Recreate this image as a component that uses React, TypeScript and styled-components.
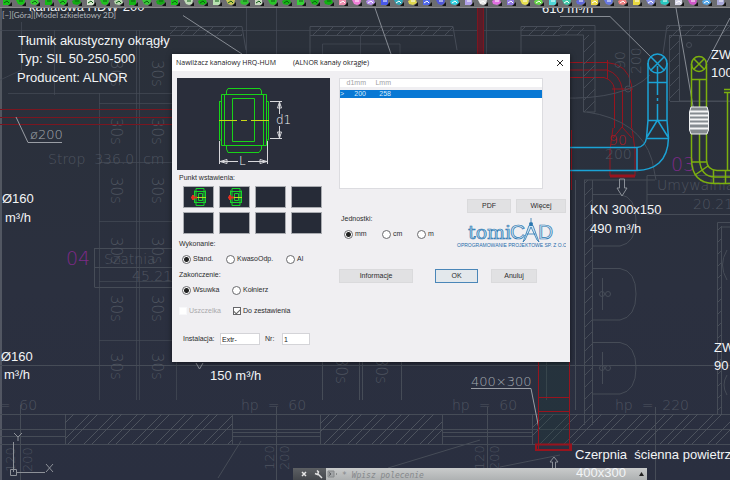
import React from "react";
import styled, { createGlobalStyle, css } from "styled-components";

const GlobalStyle = createGlobalStyle`
  * { box-sizing: border-box; }
  html, body { margin: 0; padding: 0; }
  body { background: #2a303c; font-family: "Liberation Sans", Arial, sans-serif; overflow: hidden; }
  button, input { font-family: inherit; }
`;

const Screen = styled.div`
  display: flex;
  flex-direction: column;
  height: 100vh;
  overflow: hidden;
  background: linear-gradient(#2a3039, #2b303f 60%, #2a2f40);
`;

/* ---------- toolbar ---------- */

const Toolbar = styled.div`
  display: flex;
  flex: none;
  gap: 4px;
  height: 8px;
  padding-left: 2px;
  overflow: hidden;
  background: #6c6d70;
  border-bottom: 1px solid #8b8b8d;
`;

const ToolButton = styled.button`
  flex: none;
  width: 10px;
  height: 6px;
  padding: 0;
  border: 0;
  background: none;
  line-height: 0;
`;

const toolColors = [
  "#18c418", "#18c418", "#35d02f", "#18b818", "#23c923", "#12a812", "#d8e8d0", "#20c020", "#b9d8b0", "#15b415",
  "#38c838", "#18a818", "#18c418", "#c0dcb8", "#15b815", "#b8e0b0", "#c8c85a", "#30c030", "#c8d8c0", "#28c428",
  "#15b415", "#38d038", "#18b418", "#12b012", "#f090b0", "#f080d8", "#b890f0", "#4858e8", "#30a8b8", "#e0d850",
  "#5068e8", "#5058d8", "#30d0e0", "#b0a0e8", "#e8e8e8", "#e070e0", "#9078e0", "#e8e050", "#68d848", "#50d8d8",
  "#40c8a8", "#6068d8", "#e8d848", "#6878e0", "#f08080", "#e8d840", "#8890e8", "#28c8c0", "#d8d8e8", "#d058c8",
  "#58a8e8", "#a8a8d8",
];

const ToolIcon = ({ color, index }: { color: string; index: number }) => (
  <svg width="10" height="6" viewBox="0 0 10 6">
    {index % 3 === 0 && <path d="M1 0h7v5H1z" fill={color} />}
    {index % 3 === 1 && <path d="M0 0h9L8 4 5 5 2 4z" fill={color} />}
    {index % 3 === 2 && <path d="M0 1l2-1h6l1 3-4 2-4-1z" fill={color} />}
    <path d={index % 2 ? "M3 1h4" : "M2 3l3-2 2 2"} stroke={index < 24 ? "#0b5c12" : "#fff"} fill="none" />
    <path d="M10 2v4H6z" fill="#141414" />
  </svg>
);

/* ---------- drawing sheet ---------- */

const Workspace = styled.main`
  position: relative;
  flex: 1;
  display: flex;
  flex-direction: column;
  justify-content: flex-end;
  overflow: hidden;
`;

const Sheet = styled.svg`
  position: absolute;
  inset: 0;
  width: 100%;
  height: 100%;
  pointer-events: none;
`;

const CadText = styled.text<{ $size?: number }>`
  font-family: "DejaVu Sans Light", "DejaVu Sans", sans-serif;
  font-size: ${(p) => p.$size ?? 14}px;
  font-weight: 200;
  white-space: pre;
`;

const NoteText = styled.text`
  font-family: "Liberation Sans", Arial, sans-serif;
  font-size: 13px;
  fill: #f2f4f6;
  white-space: pre;
`;

const ViewText = styled.text`
  font-family: Lato, "Liberation Sans", sans-serif;
  font-size: 8px;
  fill: #b4b8bd;
`;

const dim = "#464c57";
const label = "#4f5560";

const Drawing = () => (
  <Sheet aria-hidden="true">
    <defs>
      <pattern id="hatch" width="24" height="24" patternUnits="userSpaceOnUse">
        <path d="M-2 26L26 -2M-2 34L34 -2M-2 10L10 -2" stroke="#4d535e" fill="none" />
      </pattern>
      <pattern id="fine" width="12" height="12" patternUnits="userSpaceOnUse">
        <path d="M0 12L12 0" stroke={dim} fill="none" />
      </pattern>
    </defs>
    <g transform="translate(0 -8)" fill="none">
      <path d="M1 8V480" stroke="#7a7f86" />
      {/* walls and grid */}
      <g stroke={dim}>
        <path d="M8 93.500H172M99.500 93V400M136.500 30V400M139.500 30V400M176.500 362V400M99 103.500H172M99 162.500H172M99 221.500H172M99 281.500H172M99 340.500H172M54.500 30V95M21.500 22V70L0 80M0 30.500H730" opacity=".7" />
        <path d="M94.500 248.500H172M94.500 267.500H172M94.500 287.500H172M94.500 248V287" />
        <path d="M0 365.500H730" />
        <path d="M246.500 8V54M276.500 8V54M322.500 54V44H400V54M360.500 35V54M486.500 8V54" opacity=".7" />
        <path d="M170 26.500H242L246 50M310 54V26.500H453L457 50M521 54V26.500H560M170 35.500H242M310 35.500H453M521 35.500H560" />
        <path d="M322.500 362V400M359.500 362V400M362.500 362V400M401.500 362V400M546.500 362V400" />
        <path d="M0 414.500H730M0 444.500H730M0 429.500H730M0 436.500H65M65.500 414V444M232.500 414V444M232 432.500H320M232 436.500H320M320.500 414V444M442.500 414V444M442 432.500H532M442 436.500H532M532.500 414V444" />
        <path d="M20.500 405V480M276.500 407V480M487.500 407V480M655.500 407V480M241 441L218 478M480 440L388 468M560 455L500 467" />
      </g>
      <path d="M170 26H242V35H170zM310 26H453V35H310zM521 26H560V35H521z" fill="url(#fine)" />
      <path d="M65 414H232V444H65zM320 414H442V444H320zM532 414H730V444H532z" fill="url(#hatch)" />
      <path d="M183 15.500L242 54M375 8L391 54" stroke="#878c94" />

      {/* left rooms */}
      <g fill={label}>
        {[60, 118, 177, 237, 295, 353].map((y) => (
          <React.Fragment key={y}>
            <CadText $size={15} transform={`translate(111 ${y}) rotate(90)`}>30s</CadText>
            <CadText $size={15} transform={`translate(152 ${y}) rotate(90)`}>30s</CadText>
          </React.Fragment>
        ))}
        <CadText $size={15} transform="translate(336 357) rotate(90)">30s</CadText>
        <CadText $size={15} transform="translate(376 357) rotate(90)">30s</CadText>
        <CadText x="48" y="164">Strop  336.0  cm</CadText>
        <CadText x="104" y="264">Szatnia</CadText>
        <CadText x="132" y="281">45.21</CadText>
        <CadText x="-28" y="410">hp  =  60</CadText>
        <CadText x="241" y="410">hp  =  60</CadText>
        <CadText x="452" y="410">hp  =  60</CadText>
        <CadText x="615" y="410">hp  =  220</CadText>
        <CadText $size={13} transform="translate(274 470) rotate(-90)">120</CadText>
        <CadText $size={13} transform="translate(289 470) rotate(-90)">200</CadText>
        <CadText $size={13} transform="translate(484 470) rotate(-90)">120</CadText>
        <CadText $size={13} transform="translate(499 470) rotate(-90)">200</CadText>
        <CadText $size={13} transform="translate(15 472) rotate(-90)">120</CadText>
        <CadText $size={13} transform="translate(32 472) rotate(-90)">200</CadText>
      </g>
      <CadText $size={19} x="66" y="265" fill="#7d2a87">04</CadText>

      <path d="M0 109.500H172M0 117.500H172M0 124.500H172" stroke="#7a1620" />
      <path d="M16 117L28 142.500H62" stroke="#9a9ea5" />
      <CadText $size={13} x="30" y="139" fill="#a3a8ae">ø200</CadText>

      <path d="M196 363l3.500 6 3.500-6" stroke="#8a8f97" />
      <CadText $size={13} x="471" y="386" fill="#a3a8ae">400×300</CadText>
      <path d="M471 388.500H531L539 429" stroke="#9a9ea5" />

      {/* red ducts */}
      <path d="M477 8h7V54h-7z" fill="#5a1c28" />
      <path d="M477.500 8V54M483.500 8V54" stroke="#7c1620" />
      <path d="M539 362h31v82h-31z" fill="#1d3a3a" opacity=".35" />
      <g stroke="#98141e">
        <path d="M538.500 360V450M569.500 360V450M538 397.500H570M538 411.500H570" />
        <path d="M536 444.500H571V450H536z" strokeWidth="2" />
        <path d="M570 62.500H607Q628 64 631.500 85V128M570 77.500H604Q613 80 614.500 89V128M570 70H607Q620 74 622.500 90V128M607.500 60V79M612 89H633M613 128L610 150V176H635V150L632 128M613 138L622 127 632 138M571.500 130V190" />
        <path d="M610 176H635" strokeWidth="3" />
      </g>

      {/* right rooms */}
      <g stroke={dim}>
        <path d="M560 25.500H595V112H583.500V35H560M663 54L667 25.500H730M669.500 35.500H730M669.500 35V101M679.500 35V101H730M670 101.500H730M629.500 8V86" />
        <circle cx="628" cy="89" r="3" />
        <circle cx="689" cy="45" r="2.500" />
        <path d="M560 98Q625 100 650 75M587 112Q640 120 652 160L656 180" />
        <path d="M584.500 180V425M592.500 180V425M584 180H655M593 194.500H620Q636 197 636 220T620 246H593M593 268.500H620Q636 271 636 294T620 320H593M593 342.500H620Q636 345 636 368T620 394H593M602.500 278V310M602.500 352V384M575.500 180V410" />
        <circle cx="602" cy="294" r="2.500" /><circle cx="608" cy="294" r="2.500" />
        <circle cx="602" cy="368" r="2.500" /><circle cx="608" cy="368" r="2.500" />
        <path d="M730 175.500H647V214.500H730M647 194.500H730M717.500 414V222.500H730M721.500 414V227H730M727 250Q718 265 727 280M727 375Q721 385 727 395" />
      </g>
      <path d="M584 25H595V112H584zM595 25H560V35H595zM667 25H730V35H667zM669 35H679V101H669z" fill="url(#fine)" />
      <path d="M584 180H593V425H584zM717 222H722V414H717z" fill="url(#fine)" />
      <g fill={label}>
        <CadText transform="translate(625 69) rotate(-90)">90</CadText>
        <CadText transform="translate(641 74) rotate(-90)">200</CadText>
        <CadText x="605" y="159">200</CadText>
        <CadText x="657" y="190">Umywalnia</CadText>
        <CadText x="693" y="209">20.21</CadText>
      </g>
      <CadText x="609" y="145" fill="#b01c26">90</CadText>
      <CadText $size={19} x="671" y="171" fill="#7d2a87">03</CadText>
      <path d="M560 16.500H610L657 63M676 8L694 112M730 18L706 64" stroke="#878c94" />
      <path d="M619.500 179V188H617L622 196 627 188H624.500V179z" stroke="#8a8f97" />
      <path d="M552.500 470V462H550L554 457 558 462H555.500V470" stroke="#8a8f97" />

      <g stroke="#1ba3d6" strokeWidth="1.500">
        <circle cx="657.500" cy="63.500" r="9.500" />
        <path d="M651 70L664 57M651 57L664 70M648 63V120L646.500 138Q645 147 637 147.500H570M667 63V120L668.500 138Q668 155 659 163 651 170 637 170.500H570M648 82.500H667M648 120.500H667M646.500 138.500H668.500M647 137L657.500 120 668 137M637 147V170" />
        <path d="M657.500 66V95M657.500 98V101M657.500 104V120" />
      </g>
      <g stroke="#7cb00e" strokeWidth="1.500">
        <circle cx="699" cy="64" r="7.500" />
        <path d="M694 69L704 59M694 59L704 69M691.500 64V160Q692 183 714 183.500H730M706.500 64V160Q707 170 717 170.500H730M699.500 79V160Q701 177 715 177H730M691.500 79.500H706.500M691 162H707M713.500 170V184M725.500 170V184M695 175L708 166M724 89.500H730M724 92.500H730M727.500 92V170" />
      </g>
      <path d="M691 107H707L708.500 112V130L707 134H691L689.500 130V112z" fill="#858b90" stroke="#eef0f2" />
      <path d="M690 111.500H708M690 115.500H708M690 119.500H708M690 123.500H708M690 128.500H708" stroke="#f4f5f6" strokeWidth="2" />

      {/* coordinate marker */}
      <g stroke="#8d9198">
        <path d="M13.500 442V472M10.500 469.500h6v6h-6zM16 472.500H45M46 464l7 8M53 464l-7 8M14 433l4 4 4-4M18 437v4" />
      </g>
      <ViewText x="2" y="18">[−][Góra][Model szkieletowy 2D]</ViewText>
    </g>
  </Sheet>
);

const notes: [number, number, string][] = [
  [29, 11, "kanałowa HDW-200"],
  [18, 45, "Tłumik akustyczny okrągły"],
  [18, 63, "Typ: SIL 50-250-500"],
  [17, 82, "Producent: ALNOR"],
  [2, 203, "Ø160"],
  [5, 222, "m³/h"],
  [1, 361, "Ø160"],
  [4, 379, "m³/h"],
  [210, 380, "150 m³/h"],
  [542, 13, "610 m³/h"],
  [711, 59, "ZW"],
  [711, 77, "100"],
  [590, 214, "KN 300x150"],
  [590, 233, "490 m³/h"],
  [714, 352, "ZW"],
  [714, 370, "90"],
  [575, 459, "Czerpnia  ścienna powietrza"],
  [576, 477, "400x300"],
];

const Notes = () => (
  <Sheet>
    <g transform="translate(0 -8)">
      {notes.map(([x, y, text]) => (
        <NoteText key={`${x}-${y}`} x={x} y={y}>{text}</NoteText>
      ))}
    </g>
  </Sheet>
);

/* ---------- command line ---------- */

const CommandBar = styled.form`
  position: relative;
  display: flex;
  align-items: stretch;
  height: 12px;
  margin: 0 83px 0 293px;
  background: linear-gradient(#c9cbcb, #aeb1b2);
`;

const CommandTools = styled.div`
  display: flex;
  align-items: center;
  justify-content: space-around;
  width: 33px;
  padding-left: 4px;
  background: linear-gradient(#5d6064, #44474c);
`;

const BareButton = styled.button`
  display: flex;
  align-items: center;
  justify-content: center;
  width: 12px;
  padding: 0;
  border: 0;
  background: none;
  color: inherit;
`;

const CommandInput = styled.input`
  flex: 1;
  min-width: 0;
  padding: 2px 0 0 4px;
  border: 0;
  background: none;
  outline: none;
  font: italic 8px "DejaVu Sans Mono", monospace;
  &::placeholder { color: #85888b; opacity: 1; }
`;

/* ---------- dialog ---------- */

const Dialog = styled.section`
  position: absolute;
  top: 46px;
  left: 172px;
  width: 398px;
  max-width: calc(100% - 172px);
  padding-bottom: 17px;
  background: #f0eff2;
  color: #2c2c2e;
  font-size: 7px;
  line-height: 10px;
  box-shadow: 0 1px 5px rgba(0, 0, 0, 0.6);
`;

const TitleBar = styled.header`
  display: flex;
  align-items: center;
  height: 17px;
  padding: 0 4px;
  background: #fff;
  color: #202022;
  font-family: "Open Sans", "Noto Sans", sans-serif;
  font-size: 7px;
`;

const Title = styled.h1`
  flex: 1;
  display: flex;
  gap: 17px;
  margin: 0;
  font-size: inherit;
  font-weight: 400;
`;

const Body = styled.div`
  display: grid;
  grid-template-columns: 153px 1fr;
  column-gap: 9px;
  padding: 7px 4px 0 5px;
`;

const Column = styled.div`
  display: flex;
  flex-direction: column;
  min-width: 0;
`;

const Preview = styled.svg`
  display: block;
  width: 100%;
  height: 92px;
  background: #2a2e3b;
`;

const PreviewText = styled.text`
  font: 200 12px "DejaVu Sans Light", "DejaVu Sans", sans-serif;
  fill: #f4f4f6;
`;

const Group = styled.fieldset<{ $top: number }>`
  min-width: 0;
  margin: ${(p) => p.$top}px 0 0;
  padding: 0 0 0 2px;
  border: 0;
`;

const Legend = styled.legend`
  padding: 0;
`;

const ThumbGrid = styled.div`
  display: grid;
  grid-template-columns: repeat(4, 31px);
  gap: 4px 5px;
  padding: 3px 0 0 4px;
`;

const Thumb = styled.button`
  height: 22px;
  padding: 0;
  border: 1px solid #a9abb0;
  background: #262b37;
  line-height: 0;
`;

const Options = styled.div<{ $cols: string; $left?: number }>`
  display: grid;
  grid-template-columns: ${(p) => p.$cols};
  align-items: center;
  padding: 5px 0 0 ${(p) => p.$left ?? 3}px;
`;

const Choice = styled.label<{ $off?: boolean }>`
  display: flex;
  align-items: center;
  gap: 2px;
  height: 10px;
  white-space: nowrap;
  ${(p) => p.$off && css`color: #a9a9ac;`}
`;

const Radio = styled.input.attrs({ type: "radio" })`
  appearance: none;
  flex: none;
  width: 9px;
  height: 9px;
  margin: 0;
  border: 1px solid #6a6a6e;
  border-radius: 50%;
  background: #fff;
  &:checked { background: radial-gradient(circle, #222 0 2px, #fff 3px); }
`;

const Check = styled.input.attrs({ type: "checkbox" })`
  appearance: none;
  flex: none;
  display: grid;
  place-items: center;
  width: 8px;
  height: 8px;
  margin: 0;
  border: 1px solid #66666a;
  background: #fff;
  &:disabled { border-color: #f8f8fa; }
  &:checked::after {
    content: "";
    width: 5px;
    height: 3px;
    border: solid #666;
    border-width: 0 0 1px 1px;
    transform: rotate(-45deg);
  }
`;

const Fields = styled.div`
  display: flex;
  align-items: center;
  margin-top: 17px;
  padding-left: 6px;
`;

const FieldLabel = styled.label<{ $width: number }>`
  width: ${(p) => p.$width}px;
`;

const Field = styled.input<{ $width: number }>`
  width: ${(p) => p.$width}px;
  height: 12px;
  margin-right: 5px;
  padding: 0 1px;
  border: 1px solid #d4d4d8;
  background: #fff;
  color: #222;
  font-size: 7px;
`;

const List = styled.div`
  width: 204px;
  height: 111px;
  border: 1px solid #dcdce0;
  background: #fff;
`;

const SizeTable = styled.table`
  width: 100%;
  border-collapse: collapse;
  table-layout: fixed;
  line-height: 8px;
  th, td { padding: 0; font-weight: 400; text-align: right; }
  th { border-bottom: 3px solid #f0eff2; color: #a2a2a5; }
  th:first-child, td:first-child { width: 6px; text-align: left; }
  th:nth-child(2), td:nth-child(2) { width: 20px; }
  th:nth-child(3), td:nth-child(3) { width: 25px; }
`;

const SelectedRow = styled.tr`
  background: #0878d4;
  color: #d8ecfb;
`;

const ButtonRow = styled.div<{ $top: number; $end?: boolean }>`
  display: flex;
  justify-content: ${(p) => (p.$end ? "flex-end" : "flex-start")};
  gap: ${(p) => (p.$end ? 5 : 0)}px;
  margin-top: ${(p) => p.$top}px;
`;

const PushButton = styled.button<{ $width: number; $primary?: boolean; $gap?: number }>`
  width: ${(p) => p.$width}px;
  height: 14px;
  margin-left: ${(p) => p.$gap ?? 0}px;
  padding: 0;
  border: 1px solid ${(p) => (p.$primary ? "#4a86b8" : "#dadadc")};
  background: ${(p) => (p.$primary ? "#e3e8ec" : "#e1e1e3")};
  color: #2c2c2e;
  font-size: 7px;
  line-height: 10px;
`;

const UnitsRow = styled.div`
  display: flex;
  justify-content: space-between;
  align-items: flex-start;
`;

const LogoSvg = styled.svg`
  flex: none;
  width: 110px;
  height: 32px;
  margin-top: 4px;
`;

const LogoTomi = styled.text`
  font: 19px "DejaVu Serif", serif;
  fill: #b8d8ec;
  stroke: #2a76b0;
  stroke-width: 0.7;
`;

const LogoCad = styled.text`
  font: 21px "Liberation Sans", sans-serif;
  fill: #cfe4f2;
  stroke: #2a76b0;
  stroke-width: 0.7;
`;

const LogoLine = styled.text`
  font: 5px "Liberation Sans", sans-serif;
  fill: #1f6cab;
`;

const Fitting = () => (
  <Preview viewBox="0 0 153 92" role="img" aria-label="HRQ-HUM">
    <g fill="none" stroke="#18d418">
      <path d="M49.500 17V13L51 10.500H83L84.500 13V17M49.500 68V71L51 74.500H82L84.500 71V68M44.500 16.500H89.500V67.500H44.500zM47.500 17V67M86.500 17V67M42.500 23.500H44M42.500 23V62H44M89 23.500H91.500V62H89M55.500 20.500H77.500V63.500H55.500z" />
    </g>
    <path d="M42 42.500H60M64 42.500H70M74 42.500H92" stroke="#c8d818" />
    <g stroke="#d8d8dc" fill="none">
      <path d="M42.500 63V86M90.500 63V86M43 83.500H61M71 83.500H90M43 83.500l7-2v4zM90 83.500l-7-2v4zM93 23.500H105M93 60.500H105M102.500 24V36M102.500 48V60M102.500 24l-2 6h4zM102.500 60l-2-6h4z" />
    </g>
    <PreviewText x="62" y="87">L</PreviewText>
    <PreviewText x="99" y="46">d1</PreviewText>
  </Preview>
);

const ThumbIcon = ({ shift }: { shift: number }) => (
  <svg width="29" height="20" viewBox="0 0 29 20">
    <g fill="none" stroke="#16d42a">
      <path d="M10.500 3.500V16M21.500 3.500V16M12 1.500H20V18.500H12zM10 4.500H22M10 15.500H22M14.500 6.500H18.500V13.500H14.500z" />
    </g>
    <path d="M12 10.500H22" stroke="#b8dc20" />
    <path d={`M${shift} 10.500h6M${shift + 2} 8v5`} stroke="#e03020" strokeWidth="2" />
  </svg>
);

const Logo = () => (
  <LogoSvg viewBox="0 0 110 32" role="img" aria-label="tomiCAD">
    <LogoTomi x="12" y="22">tomi</LogoTomi>
    <LogoCad x="54" y="22">C</LogoCad>
    <path d="M75 1V5M73 8.500L67 25 69 23 75 10 81 23 83 25 77 8.500zM70.500 17H79.500" fill="#cfe4f2" stroke="#2a76b0" strokeWidth=".8" />
    <circle cx="75" cy="7" r="2" fill="#2a76b0" />
    <LogoCad x="82" y="22">D</LogoCad>
    <LogoLine x="1" y="30">OPROGRAMOWANIE PROJEKTOWE SP. Z O.O.</LogoLine>
  </LogoSvg>
);

export default function App() {
  return (
    <Screen>
      <GlobalStyle />
      <Toolbar role="toolbar">
        {toolColors.map((color, i) => (
          <ToolButton key={i} type="button" aria-label={`${i + 1}`}>
            <ToolIcon color={color} index={i} />
          </ToolButton>
        ))}
      </Toolbar>
      <Workspace>
        <Drawing />
        <CommandBar onSubmit={(e) => e.preventDefault()}>
          <CommandTools>
            <BareButton type="button" aria-label="Zamknij">
              <svg width="6" height="6"><path d="M1 1l4 4M5 1L1 5" stroke="#e6e6e6" strokeWidth="1.500" /></svg>
            </BareButton>
            <BareButton type="button" aria-label="Dostosuj">
              <svg width="9" height="9"><path d="M8 8L4 4M1 3.500L3.500 4.500 4.500 2 3 0.500" stroke="#e0e0e0" strokeWidth="1.500" fill="none" /></svg>
            </BareButton>
          </CommandTools>
          <BareButton type="button" aria-label="Historia">
            <svg width="10" height="8"><path d="M1 1h6v6H1z" fill="#a2a5a7" stroke="#85888a" /><path d="M2 2.500l2 1.500-2 1.500M9 4h1" stroke="#55585b" fill="none" /></svg>
          </BareButton>
          <CommandInput placeholder="* Wpisz polecenie" aria-label="Polecenie" />
          <BareButton type="button" aria-label="Rozwiń">
            <svg width="5" height="4"><path d="M0 4L2.500 0 5 4z" fill="#222" /></svg>
          </BareButton>
        </CommandBar>
        <Notes />

        <Dialog role="dialog" aria-labelledby="dialog-title">
          <TitleBar>
            <Title id="dialog-title">
              <span>Nawilżacz kanałowy HRQ-HUM</span>
              <span>(ALNOR kanały okrągłe)</span>
            </Title>
            <BareButton type="button" aria-label="Zamknij">
              <svg width="8" height="8"><path d="M1 1l6 6M7 1L1 7" stroke="#222" /></svg>
            </BareButton>
          </TitleBar>
          <Body>
            <Column>
              <Fitting />
              <Group $top={3}>
                <Legend>Punkt wstawienia:</Legend>
                <ThumbGrid>
                  {Array.from({ length: 8 }, (_, i) => (
                    <Thumb key={i} type="button" aria-label={`Punkt ${i + 1}`}>
                      {i < 2 && <ThumbIcon shift={i === 0 ? 7 : 8} />}
                    </Thumb>
                  ))}
                </ThumbGrid>
              </Group>
              <Group $top={5}>
                <Legend>Wykonanie:</Legend>
                <Options $cols="44px 60px auto">
                  <Choice><Radio name="version" defaultChecked />Stand.</Choice>
                  <Choice><Radio name="version" />KwasoOdp.</Choice>
                  <Choice><Radio name="version" />Al</Choice>
                </Options>
              </Group>
              <Group $top={6}>
                <Legend>Zakończenie:</Legend>
                <Options $cols="50px auto">
                  <Choice><Radio name="ending" defaultChecked />Wsuwka</Choice>
                  <Choice><Radio name="ending" />Kołnierz</Choice>
                </Options>
              </Group>
              <Group $top={6}>
                <Options $cols="54px auto" $left={0}>
                  <Choice $off><Check disabled />Uszczelka</Choice>
                  <Choice><Check defaultChecked />Do zestawienia</Choice>
                </Options>
              </Group>
              <Fields>
                <FieldLabel htmlFor="system" $width={37}>Instalacja:</FieldLabel>
                <Field id="system" $width={40} defaultValue="Extr-" />
                <FieldLabel htmlFor="number" $width={17}>Nr:</FieldLabel>
                <Field id="number" $width={28} defaultValue="1" />
              </Fields>
            </Column>
            <Column>
              <List>
                <SizeTable>
                  <thead>
                    <tr><th /><th>d1mm</th><th>Lmm</th><th /></tr>
                  </thead>
                  <tbody>
                    <SelectedRow><td>&gt;</td><td>200</td><td>258</td><td /></SelectedRow>
                  </tbody>
                </SizeTable>
              </List>
              <ButtonRow $top={10} $end>
                <PushButton type="button" $width={44}>PDF</PushButton>
                <PushButton type="button" $width={50}>Więcej</PushButton>
              </ButtonRow>
              <UnitsRow>
                <Group $top={1}>
                  <Legend>Jednostki:</Legend>
                  <Options $cols="38px 35px auto">
                    <Choice><Radio name="unit" defaultChecked />mm</Choice>
                    <Choice><Radio name="unit" />cm</Choice>
                    <Choice><Radio name="unit" />m</Choice>
                  </Options>
                </Group>
                <Logo />
              </UnitsRow>
              <ButtonRow $top={20}>
                <PushButton type="button" $width={74}>Informacje</PushButton>
                <PushButton type="button" $width={43} $gap={22} $primary>OK</PushButton>
                <PushButton type="button" $width={46} $gap={13}>Anuluj</PushButton>
              </ButtonRow>
            </Column>
          </Body>
        </Dialog>
      </Workspace>
    </Screen>
  );
}
